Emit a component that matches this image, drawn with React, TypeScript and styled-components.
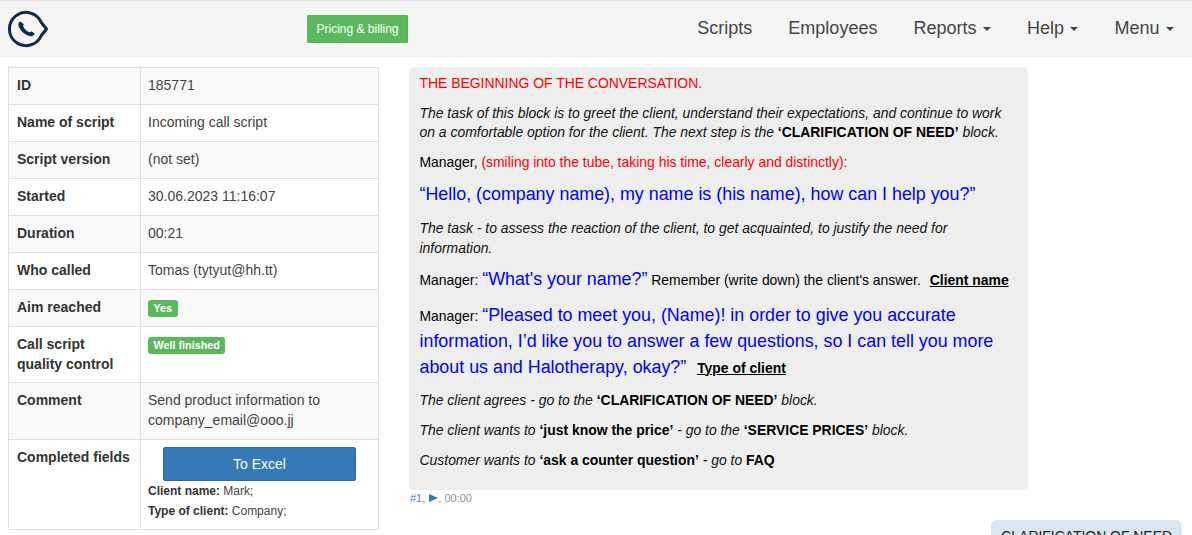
import React from 'react';
import styled, { createGlobalStyle } from 'styled-components';

const Global = createGlobalStyle`
  html, body { margin: 0; padding: 0; height: 535px; overflow: hidden; background: #fff; }
  body { font-family: "Liberation Sans", Arial, sans-serif; font-size: 14px; line-height: 20px; color: #333; }
  * { box-sizing: border-box; }
`;

const Navbar = styled.nav`
  height: 57px;
  background: #f5f5f5;
  border-top: 1px solid #e7e7e7;
  display: flex;
  align-items: center;
  padding: 0 0 0 7px;
`;
const LogoBox = styled.div`
  width: 300px;
  height: 44px;
  display: flex;
  align-items: center;
`;
const PricingButton = styled.a`
  width: 101px;
  height: 28px;
  background: #5cb85c;
  border: 1px solid #55b555;
  border-radius: 1px;
  color: #fff;
  font-size: 12px;
  line-height: 26px;
  text-align: center;
`;
const NavList = styled.ul`
  list-style: none;
  margin: -2px 0 0 auto;
  padding: 0 18px 0 0;
  display: flex;
  gap: 36px;
`;
const NavItem = styled.li`
  font-size: 18px;
  line-height: 24px;
  color: #444;
  display: flex;
  align-items: center;
  white-space: nowrap;
`;
const Caret = styled.span`
  display: inline-block;
  width: 0;
  height: 0;
  margin-left: 6.5px;
  margin-top: 1px;
  border-top: 4px solid #444;
  border-left: 4px solid transparent;
  border-right: 4px solid transparent;
`;
const Content = styled.main`
  display: flex;
  align-items: flex-start;
  padding: 10px 10px 0 8px;
  gap: 30px;
`;
const InfoTable = styled.table`
  width: 371px;
  flex: none;
  border-collapse: collapse;
  table-layout: fixed;
`;
const Row = styled.tr<{ $odd: boolean }>`
  background: ${p => (p.$odd ? '#f9f9f9' : '#fff')};
`;
const HeadCell = styled.th<{ $tight: boolean }>`
  width: 132px;
  padding: 7px 8px ${p => (p.$tight ? 8 : 9)}px;
  border: 1px solid #e0e0e0;
  font-weight: bold;
  line-height: 20px;
  text-align: left;
  vertical-align: top;
  color: #333;
`;
const Cell = styled.td<{ $tight: boolean }>`
  padding: 7px 8px ${p => (p.$tight ? 8 : 9)}px 7px;
  border: 1px solid #e0e0e0;
  line-height: 20px;
  vertical-align: top;
  color: #444;
`;
const Label = styled.span`
  display: inline-block;
  vertical-align: top;
  margin-top: 3px;
  padding: 2px 5.5px 3px;
  background: #5cb85c;
  border-radius: 3px;
  color: #fff;
  font-size: 10.8px;
  font-weight: bold;
  line-height: 12px;
`;
const ExcelButton = styled.a`
  display: block;
  width: 193px;
  height: 34px;
  margin: 0 0 0 15px;
  background: #337ab7;
  border: 1px solid #2e6da4;
  border-radius: 2px;
  color: #fff;
  font-size: 14px;
  line-height: 32px;
  text-align: center;
`;
const FieldLine = styled.div`
  font-size: 12px;
  line-height: 20px;
  b { color: #333; }
`;
const Chat = styled.section`
  flex: 1;
  min-width: 0;
`;
const Bubble = styled.div`
  width: 619px;
  height: 423px;
  padding: 7px 11px 0 10.5px;
  background: #eee;
  border-radius: 5px;
  color: #000;
  font-size: 13.93px;
  line-height: 19.8px;
`;
const Para = styled.p<{ $up?: number; $after?: number }>`
  margin: ${p => -(p.$up ?? 0)}px 0 ${p => p.$after ?? 9.9}px;
  em { color: #111; }
  b { font-style: normal; color: #000; }
`;
const Red = styled.span`
  color: #f00;
`;
const Blue = styled.span`
  color: #00f;
  font-size: 17.88px;
  line-height: 25.6px;
`;
const FieldLink = styled.b<{ $gap: number }>`
  text-decoration: underline;
  margin-left: ${p => p.$gap}px;
`;
const Meta = styled.div`
  margin-left: 1px;
  font-size: 11px;
  line-height: 16px;
  color: #5a7f9f;
  display: flex;
  align-items: center;
`;
const PlayIcon = styled.span`
  width: 0;
  height: 0;
  margin: 0 0 0 4px;
  border-left: 9px solid #337ab7;
  border-top: 4px solid transparent;
  border-bottom: 4px solid transparent;
`;
const Time = styled.span`
  color: #8a98a6;
  white-space: pre;
`;
const ReplyRow = styled.div`
  display: flex;
  justify-content: flex-end;
  margin-top: 14px;
`;
const Reply = styled.div`
  padding: 6px 10px;
  background: #d9e5f0;
  border-radius: 6px;
  color: #222;
  font-size: 13.93px;
`;

function Logo() {
  return (
    <svg width="44" height="44" viewBox="0 0 44 44" fill="none">
      <path d="M34.3 15.5 L39.5 22 L34.3 28.5 A16.6 16.6 0 1 1 34.3 15.5 Z" stroke="#0f2a4d" strokeWidth="3" strokeLinejoin="round" />
      <path d="M13.2 14.4 C11.2 15.4 10.8 17.4 11.8 19.8 C13.6 24 17.6 27.6 22.4 29 C25 29.6 26.8 28.8 27.8 26.8 L24.6 24.2 C23.6 25.2 22.6 25.4 21.2 24.8 C19 23.6 17.4 21.8 16.4 19.8 C16 18.8 16.2 18 17 17.2 Z" fill="#0f2a4d" />
    </svg>
  );
}

const rows: [string, React.ReactNode][] = [
  ['ID', '185771'],
  ['Name of script', 'Incoming call script'],
  ['Script version', '(not set)'],
  ['Started', '30.06.2023 11:16:07'],
  ['Duration', '00:21'],
  ['Who called', 'Tomas (tytyut@hh.tt)'],
  ['Aim reached', <Label>Yes</Label>],
  ['Call script quality control', <Label>Well finished</Label>],
  ['Comment', 'Send product information to company_email@ooo.jj'],
  ['Completed fields', (
    <>
      <ExcelButton>To Excel</ExcelButton>
      <FieldLine><b>Client name:</b> Mark;</FieldLine>
      <FieldLine><b>Type of client:</b> Company;</FieldLine>
    </>
  )],
];

export default function App() {
  return (
    <>
      <Global />
      <Navbar>
        <LogoBox><Logo /></LogoBox>
        <PricingButton>Pricing &amp; billing</PricingButton>
        <NavList>
          <NavItem>Scripts</NavItem>
          <NavItem>Employees</NavItem>
          <NavItem>Reports<Caret /></NavItem>
          <NavItem>Help<Caret /></NavItem>
          <NavItem>Menu<Caret /></NavItem>
        </NavList>
      </Navbar>
      <Content>
        <InfoTable>
          <tbody>
            {rows.map(([k, v], i) => (
              <Row key={k} $odd={i % 2 === 0}>
                <HeadCell $tight={i === 7 || i === 9}>{k}</HeadCell>
                <Cell $tight={i === 7 || i === 9}>{v}</Cell>
              </Row>
            ))}
          </tbody>
        </InfoTable>
        <Chat>
          <Bubble>
            <Para><Red>THE BEGINNING OF THE CONVERSATION.</Red></Para>
            <Para><em>The task of this block is to greet the client, understand their expectations, and continue to work on a comfortable option for the client. The next step is the <b>‘CLARIFICATION OF NEED’</b> block.</em></Para>
            <Para>Manager, <Red>(smiling into the tube, taking his time, clearly and distinctly):</Red></Para>
            <Para $up={1} $after={11.9}><Blue>“Hello, (company name), my name is (his name), how can I help you?”</Blue></Para>
            <Para><em>The task - to assess the reaction of the client, to get acquainted, to justify the need for information.</em></Para>
            <Para $up={2} $after={10.9}>Manager: <Blue>“What's your name?”</Blue> Remember (write down) the client's answer. <FieldLink $gap={5}>Client name</FieldLink></Para>
            <Para $after={10.9}>Manager: <Blue>“Pleased to meet you, (Name)! in order to give you accurate information, I’d like you to answer a few questions, so I can tell you more about us and Halotherapy, okay?”</Blue> <FieldLink $gap={7}>Type of client</FieldLink></Para>
            <Para><em>The client agrees - go to the <b>‘CLARIFICATION OF NEED’</b> block.</em></Para>
            <Para $after={10.9}><em>The client wants to <b>‘just know the price’</b> - go to the <b>‘SERVICE PRICES’</b> block.</em></Para>
            <Para><em>Customer wants to <b>‘ask a counter question’</b> - go to <b>FAQ</b></em></Para>
          </Bubble>
          <Meta>#1,<PlayIcon /><Time>, 00:00</Time></Meta>
          <ReplyRow><Reply>CLARIFICATION OF NEED</Reply></ReplyRow>
        </Chat>
      </Content>
    </>
  );
}
